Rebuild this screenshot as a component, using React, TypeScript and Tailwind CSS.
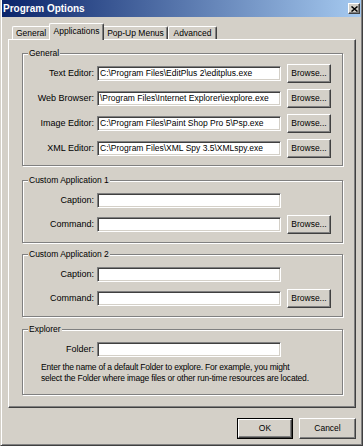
import React from "react";

const bevel =
  "bg-[#d4d0c8] border border-t-white border-l-white border-r-[#404040] border-b-[#404040] shadow-[inset_-1px_-1px_0_#808080]";

function Btn({ children, className = "" }: { children: React.ReactNode; className?: string }) {
  return (
    <div className={`${bevel} flex items-center justify-center text-[8.5px] leading-none text-black ${className}`}>
      {children}
    </div>
  );
}

function Field({ value = "", w = "w-[184px]" }: { value?: string; w?: string }) {
  return (
    <div
      className={`${w} h-[15px] bg-white border border-t-[#808080] border-l-[#808080] border-r-white border-b-white shadow-[inset_1px_1px_0_#404040,inset_-1px_-1px_0_#d4d0c8] text-[8.5px] leading-[13px] pl-[2px] overflow-hidden whitespace-nowrap`}
    >
      {value}
    </div>
  );
}

function Row({ label, value, browse = false }: { label: string; value?: string; browse?: boolean }) {
  return (
    <div className="flex items-center h-[19px]">
      <div className="w-[67px] text-right text-[9px] leading-none mr-[3px] whitespace-nowrap">{label}</div>
      <Field value={value} />
      {browse && <Btn className="w-[44px] h-[19px] ml-[6px]">Browse...</Btn>}
    </div>
  );
}

function Group({
  title,
  children,
  className = "",
}: {
  title: string;
  children: React.ReactNode;
  className?: string;
}) {
  return (
    <fieldset
      className={`border border-[#808080] shadow-[inset_1px_1px_0_#fff,1px_1px_0_#fff] m-0 p-0 min-w-0 ${className}`}
    >
      <legend className="ml-[5px] px-[1px] text-[8.5px] leading-[11px] bg-[#d4d0c8]">{title}</legend>
      {children}
    </fieldset>
  );
}

export default function App() {
  return (
    <div className="w-[363px] h-[446px] bg-[#d4d0c8] font-['Liberation_Sans',Arial,sans-serif] text-black flex flex-col border-l border-l-[#d4d0c8] border-r border-b border-r-[#404040] border-b-[#404040] shadow-[inset_1px_0_0_#fff,inset_-1px_-1px_0_#808080] overflow-hidden">
      {/* Title bar */}
      <div className="h-[17px] ml-[1px] mr-[1px] pr-[1px] flex items-center bg-[linear-gradient(to_right,#0a246a,#a6caf0)]">
        <div className="flex-1 pl-[1px] text-white font-bold text-[10px] leading-none whitespace-nowrap">
          Program Options
        </div>
        <div className={`${bevel} w-[12px] h-[11px] flex items-center justify-center`}>
          <svg width="7" height="6" viewBox="0 0 7 6">
            <path d="M0.5 0.5 L6.5 5.5 M6.5 0.5 L0.5 5.5" stroke="#000" strokeWidth="1.5" fill="none" />
          </svg>
        </div>
      </div>

      {/* Body */}
      <div className="flex flex-col pl-[7px] pr-[6px]">
        {/* Tabs */}
        <div className="relative z-10 flex items-end h-[17px] mt-[6px] -mb-[1px] pl-[4px]">
          <div className="w-[37px] h-[13px] mb-[1px] border-l border-t border-white rounded-tl-[2px] flex items-center justify-center text-[8.5px] leading-none">
            General
          </div>
          <div className="w-[55px] h-[17px] bg-[#d4d0c8] border-l border-t border-white border-r border-r-[#404040] shadow-[inset_-1px_0_0_#808080] rounded-t-[2px] flex items-start justify-center pt-[3px] text-[8.5px] leading-none">
            Applications
          </div>
          <div className="w-[64px] h-[13px] mb-[1px] border-t border-white border-r border-r-[#404040] shadow-[inset_-1px_0_0_#808080] rounded-tr-[2px] flex items-center justify-center text-[8.5px] leading-none">
            Pop-Up Menus
          </div>
          <div className="w-[49px] h-[13px] mb-[1px] border-l border-t border-white border-r border-r-[#404040] shadow-[inset_-1px_0_0_#808080] rounded-t-[2px] flex items-center justify-center text-[8.5px] leading-none">
            Advanced
          </div>
        </div>

        {/* Panel */}
        <div className="h-[369px] border border-t-white border-l-white border-r-[#404040] border-b-[#404040] shadow-[inset_-1px_-1px_0_#808080] pt-[8px] pl-[13px] pr-[12px] flex flex-col">
          <Group title="General">
            <div className="flex flex-col gap-[6px] pt-[5px] pl-[4px] pb-[7px]">
              <Row label="Text Editor:" value="C:\Program Files\EditPlus 2\editplus.exe" browse />
              <Row label="Web Browser:" value="\Program Files\Internet Explorer\iexplore.exe" browse />
              <Row label="Image Editor:" value="C:\Program Files\Paint Shop Pro 5\Psp.exe" browse />
              <Row label="XML Editor:" value="C:\Program Files\XML Spy 3.5\XMLspy.exe" browse />
            </div>
          </Group>

          <Group title="Custom Application 1" className="mt-[9px]">
            <div className="flex flex-col gap-[5px] pt-[5px] pl-[4px] pb-[8px]">
              <Row label="Caption:" />
              <Row label="Command:" browse />
            </div>
          </Group>

          <Group title="Custom Application 2" className="mt-[6px]">
            <div className="flex flex-col gap-[5px] pt-[5px] pl-[4px] pb-[8px]">
              <Row label="Caption:" />
              <Row label="Command:" browse />
            </div>
          </Group>

          <Group title="Explorer" className="mt-[7px]">
            <div className="flex flex-col pt-[5px] pl-[4px] pb-[10px]">
              <Row label="Folder:" />
              <div className="mt-[3px] ml-[14px] text-[8.5px] leading-[11px] tracking-[-0.2px] whitespace-nowrap">
                Enter the name of a default Folder to explore. For example, you might
                <br />
                select the Folder where image files or other run-time resources are located.
              </div>
            </div>
          </Group>
        </div>

        {/* Buttons */}
        <div className="flex justify-end gap-[6px] mt-[10px]">
          <div className="border border-black">
            <Btn className="w-[54px] h-[19px]">OK</Btn>
          </div>
          <Btn className="w-[57px] h-[21px]">Cancel</Btn>
        </div>
      </div>
    </div>
  );
}
